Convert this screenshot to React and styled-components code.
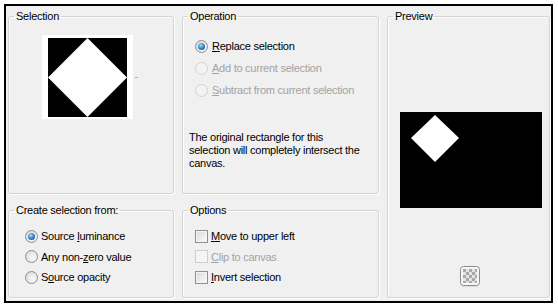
import React from 'react'
import styled, { createGlobalStyle } from 'styled-components'

const GlobalStyle = createGlobalStyle`
  body {
    margin: 0;
    background: #fff;
    font-family: "Liberation Sans", Arial, sans-serif;
    font-size: 11px;
    letter-spacing: -0.25px;
    color: #000;
  }
`

const Page = styled.div`
  padding: 4px 0 0 4px;
`

const Frame = styled.div`
  box-sizing: border-box;
  width: 549px;
  height: 299px;
  border: 2px solid #000;
  background: #f0f0f0;
  padding: 4px 1px 3px 2px;
  display: grid;
  grid-template-columns: 166px 197px 163px;
  grid-template-rows: 184px 94px;
  column-gap: 8px;
  row-gap: 10px;
`

const Group = styled.fieldset`
  margin: 0;
  padding: 0;
  min-width: 0;
  border: 1px solid #d3d3d3;
  border-radius: 3px;
  box-shadow: inset 1px 1px 0 #fff, 1px 1px 0 #fff;
  grid-column: ${p => p.$col};
  grid-row: ${p => p.$row};
  display: flex;
  flex-direction: column;
`

const Legend = styled.legend`
  margin-left: 5px;
  padding: 0 2px;
  line-height: 13px;
`

const ThumbRow = styled.div`
  display: flex;
  align-items: center;
  margin: 12px 0 0 33px;
`

const Thumb = styled.div`
  background: #fff;
  padding: 3px 6px 2px;
  line-height: 0;
`

const Dash = styled.span`
  width: 3px;
  height: 1px;
  margin-left: 2px;
  background: #b4b4b4;
`

const List = styled.div`
  display: flex;
  flex-direction: column;
  margin: ${p => p.$top}px 0 0 ${p => p.$left}px;
`

const Row = styled.label`
  display: flex;
  align-items: center;
  gap: ${p => p.$gap}px;
  height: ${p => p.$h}px;
  color: ${p => (p.$disabled ? '#a3a3a3' : '#000')};
  white-space: nowrap;
`

const Radio = styled.span`
  box-sizing: border-box;
  width: 13px;
  height: 13px;
  border-radius: 50%;
  border: 1px solid ${p => (p.$disabled ? '#d2d2d2' : '#8e8f8f')};
  background: ${p =>
    p.$disabled
      ? '#f3f3f3'
      : 'radial-gradient(circle at 65% 65%, #fbfbfb 0%, #e6e6e6 55%, #cfcfcf 100%)'};
  display: flex;
  align-items: center;
  justify-content: center;
`

const Dot = styled.span`
  width: 7px;
  height: 7px;
  border-radius: 50%;
  background: radial-gradient(circle at 40% 35%, #a9e1fa 0%, #3b8ccc 45%, #143f78 100%);
`

const Check = styled.span`
  box-sizing: border-box;
  width: 13px;
  height: 13px;
  border: 1px solid ${p => (p.$disabled ? '#cdcdcd' : '#8f8f8f')};
  box-shadow: inset 0 0 0 1px ${p => (p.$disabled ? '#f6f6f6' : '#f4f4f4')};
  background: ${p =>
    p.$disabled ? '#f4f4f4' : 'linear-gradient(135deg, #d8d8d8 0%, #f2f2f2 70%, #fbfbfb 100%)'};
`

const Note = styled.p`
  margin: 30px 0 0 6px;
  line-height: 13px;
  white-space: nowrap;
`

const PreviewBox = styled.div`
  margin: 89px 0 0 12px;
  line-height: 0;
`

const IconButton = styled.div`
  margin: 58px 0 0 72px;
  line-height: 0;
`

const Option = ({ kind, label, checked, disabled, h, gap }) => (
  <Row $h={h} $gap={gap} $disabled={disabled}>
    {kind === 'radio' ? (
      <Radio $disabled={disabled}>{checked && <Dot />}</Radio>
    ) : (
      <Check $disabled={disabled} />
    )}
    <span>{label}</span>
  </Row>
)

const App = () => {
  return (
    <Page>
      <GlobalStyle />
      <Frame>
        <Group $col="1" $row="1">
          <Legend>Selection</Legend>
          <ThumbRow>
            <Thumb>
              <svg width="79" height="79" viewBox="0 0 79 79">
                <rect width="79" height="79" fill="#000" />
                <polygon points="39.5,0 79,39.5 39.5,79 0,39.5" fill="#fff" />
              </svg>
            </Thumb>
            <Dash />
          </ThumbRow>
        </Group>

        <Group $col="2" $row="1">
          <Legend>Operation</Legend>
          <List $top={12} $left={12}>
            <Option kind="radio" h={22} gap={4} checked label={<><u>R</u>eplace selection</>} />
            <Option kind="radio" h={22} gap={4} disabled label={<><u>A</u>dd to current selection</>} />
            <Option kind="radio" h={22} gap={4} disabled label={<><u>S</u>ubtract from current selection</>} />
          </List>
          <Note>
            The original rectangle for this
            <br />
            selection will completely intersect the
            <br />
            canvas.
          </Note>
        </Group>

        <Group $col="3" $row="1 / 3">
          <Legend>Preview</Legend>
          <PreviewBox>
            <svg width="142" height="96" viewBox="0 0 142 96">
              <rect width="142" height="96" fill="#000" />
              <polygon points="35,3 59,26 35,50 11,26" fill="#fff" />
            </svg>
          </PreviewBox>
          <IconButton>
            <svg width="20" height="21" viewBox="0 0 20 21">
              <defs>
                <pattern id="chk" width="6" height="6" patternUnits="userSpaceOnUse" x="3" y="3">
                  <rect width="6" height="6" fill="#e4e4e4" />
                  <rect width="3" height="3" fill="#a9a9a9" />
                  <rect x="3" y="3" width="3" height="3" fill="#a9a9a9" />
                </pattern>
              </defs>
              <rect x="0.5" y="0.5" width="19" height="19" rx="3" fill="#f6f6f6" stroke="#8c8c8c" />
              <rect x="3" y="3" width="14" height="14" fill="url(#chk)" />
              <line x1="2" y1="20.5" x2="18" y2="20.5" stroke="#dcdcdc" />
            </svg>
          </IconButton>
        </Group>

        <Group $col="1" $row="2">
          <Legend>Create selection from:</Legend>
          <List $top={9} $left={16}>
            <Option kind="radio" h={20.5} gap={3} checked label={<>Source <u>l</u>uminance</>} />
            <Option kind="radio" h={20.5} gap={3} label={<>Any non-<u>z</u>ero value</>} />
            <Option kind="radio" h={20.5} gap={3} label={<>S<u>o</u>urce opacity</>} />
          </List>
        </Group>

        <Group $col="2" $row="2">
          <Legend>Options</Legend>
          <List $top={9} $left={12}>
            <Option kind="check" h={20.5} gap={3} label={<><u>M</u>ove to upper left</>} />
            <Option kind="check" h={20.5} gap={3} disabled label={<><u>C</u>lip to canvas</>} />
            <Option kind="check" h={20.5} gap={3} label={<><u>I</u>nvert selection</>} />
          </List>
        </Group>
      </Frame>
    </Page>
  )
}

export default App
